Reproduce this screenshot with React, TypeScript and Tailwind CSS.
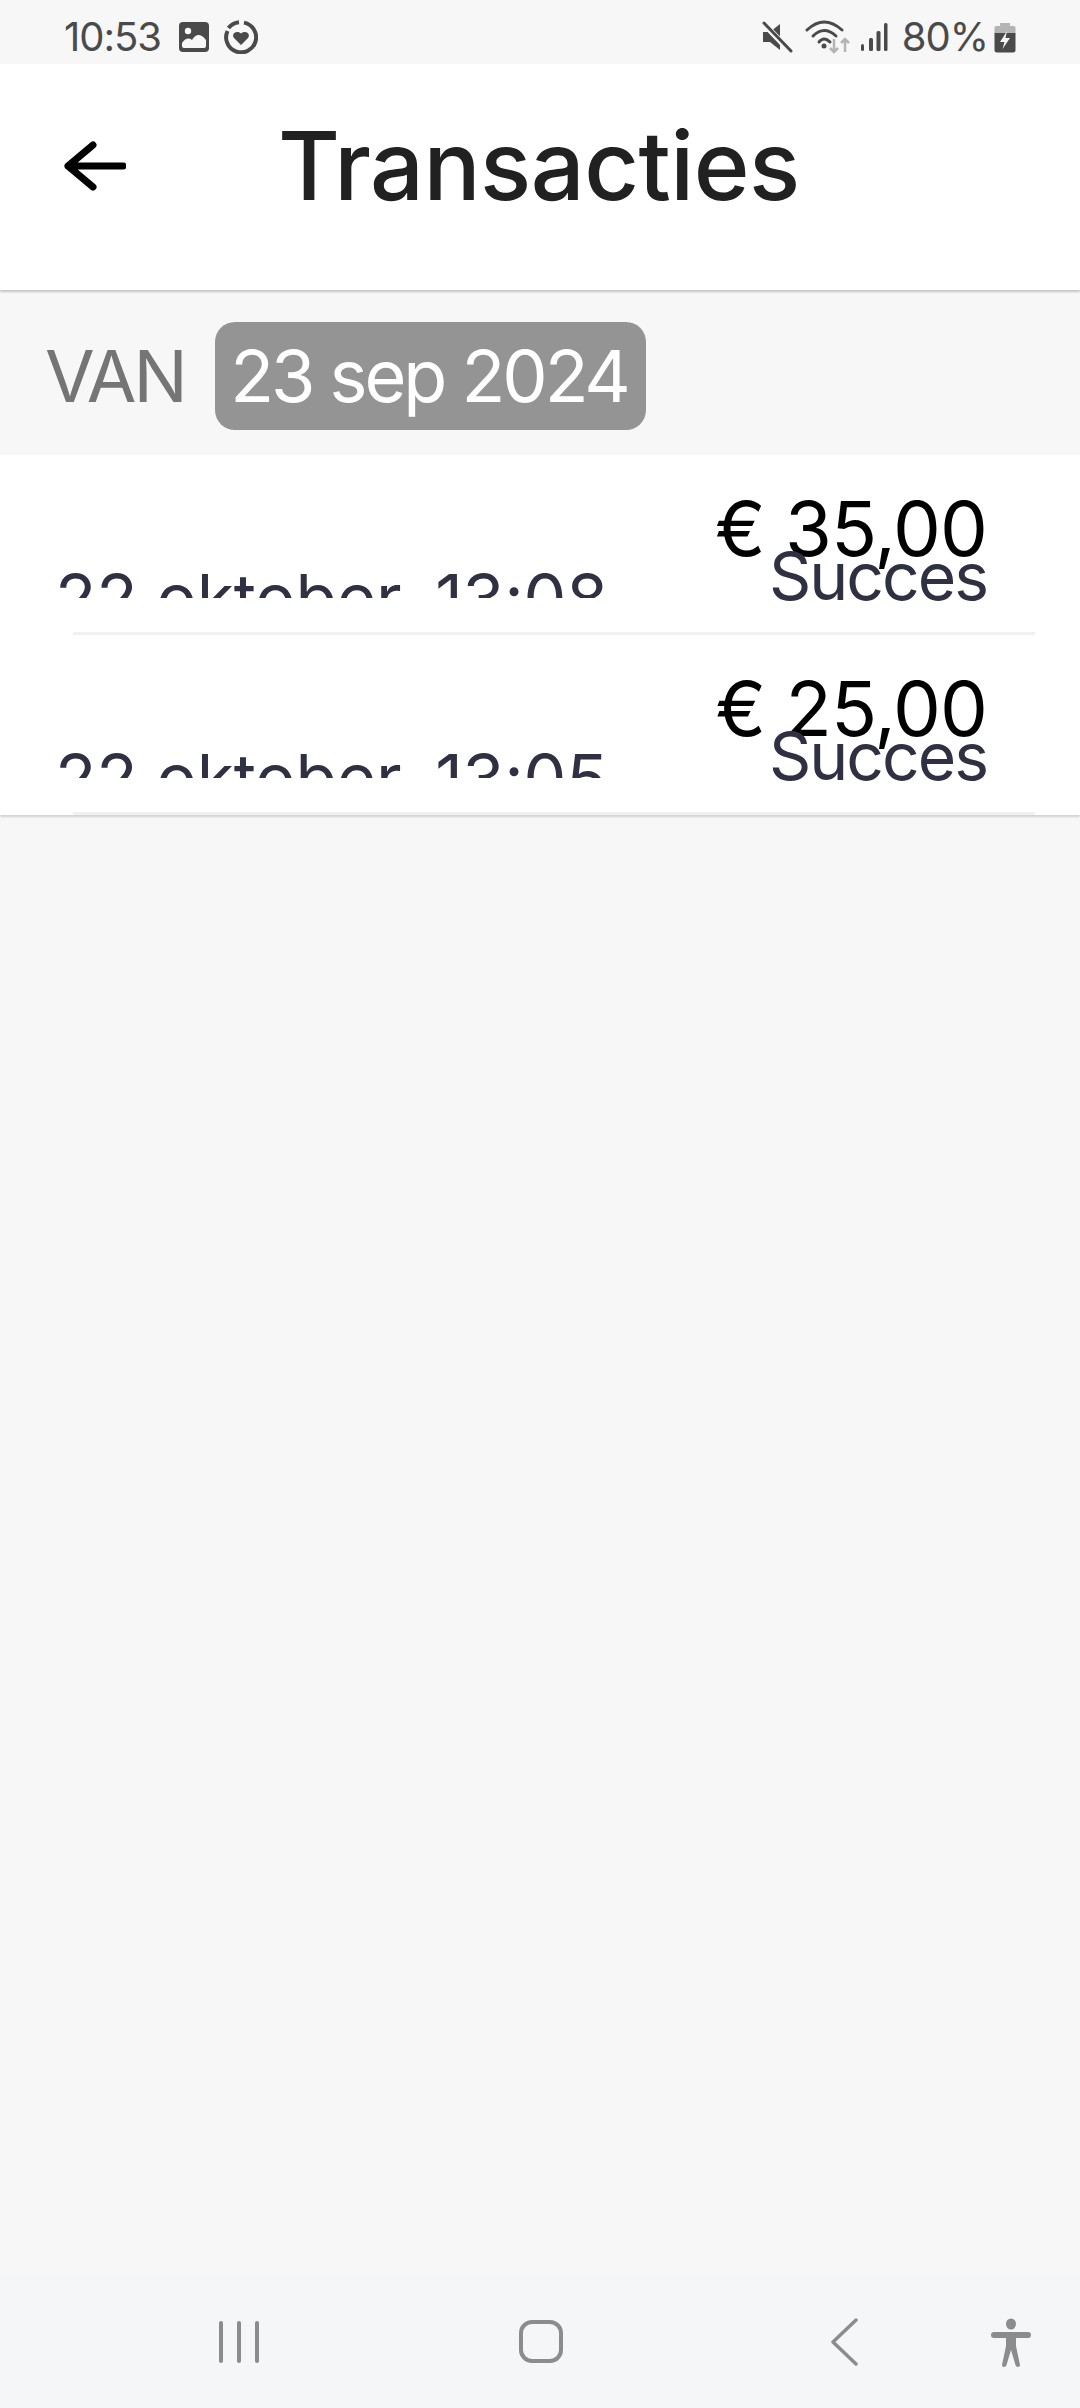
import React from "react";

const ff = { fontFamily: '"Inter", "Roboto", sans-serif' };

function ImageIcon() {
  return (
    <svg width="32" height="32" viewBox="0 0 32 32" className="ml-[17px]">
      <rect x="1" y="1" width="30" height="30" rx="4" fill="#4a4a4a" />
      <circle cx="10" cy="10" r="3.2" fill="#f7f7f7" />
      <path d="M4 25 L4 22 Q9 15 14 19 Q20 9 28 19 L28 25 Q28 27 26 27 L6 27 Q4 27 4 25Z" fill="#f7f7f7" />
    </svg>
  );
}
function HeartRing() {
  return (
    <svg width="34" height="34" viewBox="0 0 34 34" className="ml-[14px]">
      <path d="M20 2.6 A15 15 0 1 1 3.5 11" fill="none" stroke="#4a4a4a" strokeWidth="4" />
      <path d="M4.5 8 A15 15 0 0 1 15 2.2" fill="none" stroke="#4a4a4a" strokeWidth="4" />
      <path d="M17 25 L10 18 C7 14 12 9.500 17 13.500 C22 9.500 27 14 24 18Z" fill="#4a4a4a" />
    </svg>
  );
}
function Mute() {
  return (
    <svg width="32" height="32" viewBox="0 0 32 32">
      <path d="M2 11 H9 L19 3 V29 L9 21 H2Z" fill="#4a4a4a" />
      <path d="M3 3 L29 30" stroke="#f7f7f7" strokeWidth="6" />
      <path d="M3 2 L30 30" stroke="#4a4a4a" strokeWidth="3" strokeLinecap="round" />
    </svg>
  );
}
function Wifi() {
  return (
    <svg width="46" height="36" viewBox="0 0 46 36">
      <path d="M2 11 Q19 -5 37 11" fill="none" stroke="#4a4a4a" strokeWidth="3" strokeLinecap="round" />
      <path d="M8 17 Q19 6 31 17" fill="none" stroke="#4a4a4a" strokeWidth="3" strokeLinecap="round" />
      <path d="M14 23 Q19 17 25 23" fill="none" stroke="#4a4a4a" strokeWidth="3" strokeLinecap="round" />
      <circle cx="19" cy="27" r="2.500" fill="#4a4a4a" />
      <path d="M29 20 V33 M25 29 L29 33 L33 29" fill="none" stroke="#b4b4b4" strokeWidth="2.500" />
      <path d="M40 33 V20 M36 24 L40 20 L44 24" fill="none" stroke="#b4b4b4" strokeWidth="2.500" />
    </svg>
  );
}
function Signal() {
  return (
    <svg width="28" height="30" viewBox="0 0 28 30" className="ml-[9px]">
      <rect x="1" y="22" width="3" height="7" rx="1.500" fill="#4a4a4a" />
      <rect x="9" y="16" width="4" height="13" rx="1.500" fill="#4a4a4a" />
      <rect x="16.500" y="9" width="4" height="20" rx="1.500" fill="#4a4a4a" />
      <rect x="24" y="1" width="3.500" height="28" rx="1.500" fill="#4a4a4a" />
    </svg>
  );
}
function Battery() {
  return (
    <svg width="22" height="31" viewBox="0 0 22 31" className="ml-[6px]">
      <path d="M6 1 H16 V4 H20 Q21.500 4 21.500 6 V12 H0.500 V6 Q0.500 4 2 4 H6Z" fill="#b4b4b4" />
      <path d="M0.500 11 H21.500 V28 Q21.500 30.500 19 30.500 H3 Q0.500 30.500 0.500 28Z" fill="#4a4a4a" />
      <path d="M13 9 L6 20 H10.500 L8.500 27 L16 16 H11.500Z" fill="#f7f7f7" />
    </svg>
  );
}

function Row({ amount, date }: { amount: string; date: string }) {
  return (
    <div className="h-[180px] flex flex-col pt-[37px] relative">
      <div className="flex justify-between pl-[55px] pr-[93px]">
        <div className="h-[106px] overflow-hidden">
          <div className="mt-[71px] text-[68px] leading-[70px] text-[#2f3142] whitespace-nowrap tracking-[-0.3px]">{date}</div>
        </div>
        <div className="flex flex-col items-end">
          <div className="text-[76px] leading-[72px] text-black whitespace-nowrap tracking-[-1px]">{amount}</div>
          <div className="-mt-[12px] text-[66px] leading-[48px] text-[#2f3142] tracking-[-2px]">Succes</div>
        </div>
      </div>
      <div className="absolute bottom-0 left-[73px] right-[45px] h-[3px] bg-[#eff1f3]" />
    </div>
  );
}

export default function App() {
  return (
    <div style={ff} className="w-[1080px] h-[2408px] bg-[#f7f7f7] flex flex-col overflow-hidden">
      <div className="h-[64px] flex items-center justify-between pt-[10px] pl-[64px] pr-[64px] text-[#4a4a4a] text-[40px] shrink-0">
        <div className="flex items-center">
          <span className="tracking-[-1px] leading-none">10:53</span>
          <ImageIcon />
          <HeartRing />
        </div>
        <div className="flex items-center">
          <Mute />
          <div className="ml-[12px]"><Wifi /></div>
          <Signal />
          <span className="ml-[14px] tracking-[-1px] leading-none">80%</span>
          <Battery />
        </div>
      </div>

      <div className="h-[226px] bg-white flex items-start shadow-[0_2px_2px_rgba(0,0,0,0.2)] shrink-0 relative">
        <svg width="62" height="50" viewBox="0 0 62 50" className="ml-[64px] mt-[77px]">
          <path d="M4 25 H59 M29 4 L4 25 L29 46" fill="none" stroke="#000" strokeWidth="7" strokeLinecap="round" strokeLinejoin="round" />
        </svg>
        <div className="ml-[152px] mt-[46px] text-[95px] leading-[112px] font-[550] text-[#212121] tracking-[-0.5px]">Transacties</div>
      </div>

      <div className="h-[165px] flex items-start pt-[32px] pl-[45px] shrink-0">
        <span className="w-[170px] h-[108px] flex items-center text-[72px] text-[#757575] leading-none tracking-[-3px]">VAN</span>
        <div className="w-[431px] h-[108px] rounded-[20px] bg-[#949494] text-white text-[72px] flex items-center justify-center pr-[3px] tracking-[-3.1px] leading-none">23 sep 2024</div>
      </div>

      <div className="bg-white shadow-[0_2px_2px_rgba(0,0,0,0.15)] shrink-0">
        <Row amount="€ 35,00" date="22 oktober, 13:08" />
        <Row amount="€ 25,00" date="22 oktober, 13:05" />
      </div>

      <div className="flex-1" />

      <div className="h-[134px] bg-[#f5f6f8] relative shrink-0">
        <div className="absolute left-[219px] top-[47px] flex gap-[14px]">
          <div className="w-[4px] h-[42px] rounded-full bg-[#8c8c8c]" />
          <div className="w-[4px] h-[42px] rounded-full bg-[#8c8c8c]" />
          <div className="w-[4px] h-[42px] rounded-full bg-[#8c8c8c]" />
        </div>
        <div className="absolute left-[519px] top-[46px] w-[44px] h-[43px] rounded-[13px] border-[4px] border-[#8c8c8c]" />
        <svg width="28" height="48" viewBox="0 0 28 48" className="absolute left-[830px] top-[44px]">
          <path d="M26 2 L3 24 L26 46" fill="none" stroke="#8c8c8c" strokeWidth="3.500" strokeLinecap="round" strokeLinejoin="round" />
        </svg>
        <svg width="40" height="50" viewBox="0 0 40 50" className="absolute left-[991px] top-[44px]">
          <ellipse cx="20" cy="6" rx="5" ry="5.500" fill="#8c8c8c" />
          <path d="M3 14 H37 Q40 14 40 17 Q40 20 37 20 H25 L25 28 L29 47 Q29 49 27 49 Q25 49 24.500 47 L20 32 L15.500 47 Q15 49 13 49 Q11 49 11 47 L15 28 L15 20 H3 Q0 20 0 17 Q0 14 3 14Z" fill="#8c8c8c" />
        </svg>
      </div>
    </div>
  );
}
